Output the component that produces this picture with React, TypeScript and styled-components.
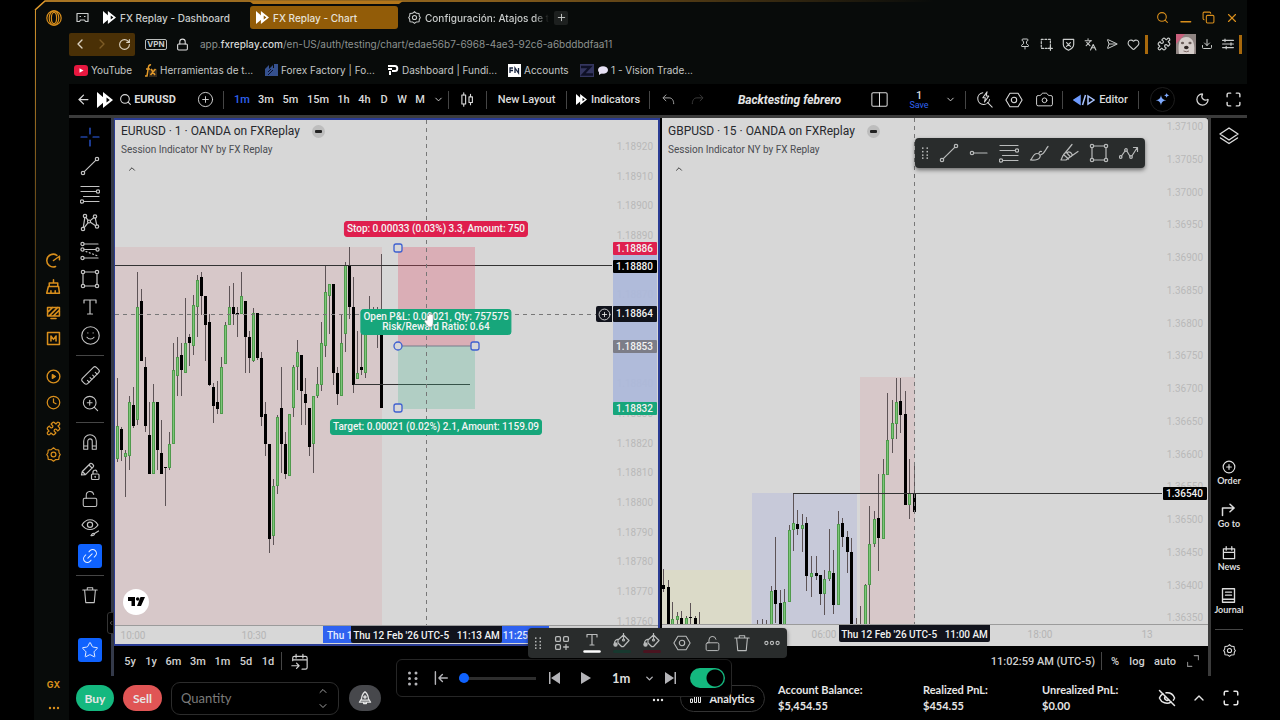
import React from "react";
import styled, { createGlobalStyle, css } from "styled-components";
import {
  ArrowLeft,
  Camera,
  ChevronDown,
  ChevronLeft,
  ChevronRight,
  ChevronUp,
  CirclePlus,
  Clock,
  Copy,
  Download,
  EyeOff,
  Heart,
  Languages,
  Lock,
  LockOpen,
  Link2,
  Maximize,
  Moon,
  Pin,
  Plus,
  Puzzle,
  RotateCw,
  Ruler,
  Search,
  SendHorizontal,
  Smile,
  Star,
  X,
  ZoomIn,
} from "lucide-react";

const ui = `Inter, "Liberation Sans", sans-serif`;
const tv = `Roboto, "Noto Sans", sans-serif`;
const panel = `Lato, "Noto Sans", sans-serif`;

const gold = "#d98f1c";

const Global = createGlobalStyle`
  * { box-sizing: border-box; }
  body { margin: 0; background: #000; color: #ddd; font-family: ${tv}; }
  button, input, select { font: inherit; color: inherit; }
  button { background: none; border: 0; padding: 0; display: inline-flex; align-items: center; justify-content: center; cursor: pointer; white-space: nowrap; }
  a { color: inherit; text-decoration: none; }
  svg { display: block; flex: none; }
`;

const Desktop = styled.div`
  min-height: 100vh;
  display: flex;
  padding: 0 33px 0 34px;
  background: #000;
`;

const BrowserWindow = styled.div`
  position: relative;
  flex: 1;
  min-width: 0;
  display: flex;
  flex-direction: column;
  background: #080b0a;
`;

const FrameLine = styled.svg`
  position: absolute;
  inset: 0;
  width: 100%;
  height: 100%;
  pointer-events: none;
`;

const TabBar = styled.header`
  display: flex;
  align-items: center;
  gap: 14px;
  height: 30px;
  padding: 6px 8px 1px 12px;
  position: relative;
  font-family: ${ui};
  font-size: 10px;
  font-weight: 500;
  color: #c9cccb;
`;

const TabStrip = styled.nav`
  display: flex;
  align-items: center;
  align-self: stretch;
  gap: 4px;
  flex: 1;
  min-width: 0;
  margin-left: -6px;
`;

const Tab = styled.a<{ $active?: boolean; $width: number }>`
  display: flex;
  align-items: center;
  gap: 4px;
  align-self: stretch;
  width: ${(p) => p.$width}px;
  padding: 0 6px;
  border-radius: 3px;
  white-space: nowrap;
  background: ${(p) => (p.$active ? "#925c08" : "transparent")};
  color: ${(p) => (p.$active ? "#e6e1d8" : "#c9cccb")};
`;

const FadedText = styled.span`
  mask-image: linear-gradient(90deg, #000 88%, transparent);
`;

const NewTab = styled.button`
  width: 14px;
  height: 14px;
  border-radius: 2px;
  background: #1d201f;
`;

const IconRow = styled.div<{ $gap: number; $color?: string; $indent?: number }>`
  display: flex;
  align-items: center;
  gap: ${(p) => p.$gap}px;
  margin-left: ${(p) => p.$indent ?? 0}px;
  color: ${(p) => p.$color ?? "#c9cccb"};
`;

const BrowserBody = styled.div`
  display: flex;
  flex: 1;
`;

const GxRail = styled.nav`
  width: 35px;
  display: flex;
  flex-direction: column;
  align-items: center;
  color: ${gold};
  padding: 217px 0 0 4px;
`;

const RailButton = styled.button`
  width: 26px;
  height: 26px;
  color: ${gold};
`;

const RailGap = styled.div<{ $grow?: boolean }>`
  height: 12px;
  flex-grow: ${(p) => (p.$grow ? 1 : 0)};
`;

const GxLabel = styled.button`
  height: 24px;
  font-family: ${ui};
  font-size: 9px;
  font-weight: 700;
  color: ${gold};
`;

const Content = styled.div`
  flex: 1;
  min-width: 0;
  display: flex;
  flex-direction: column;
`;

const AddressBar = styled.div`
  display: flex;
  align-items: center;
  height: 28px;
  font-family: ${ui};
  font-size: 10px;
  padding-right: 5px;
`;

const NavButtons = styled.div`
  display: flex;
  align-items: center;
  width: 66px;
  height: 23px;
  background: #4a3006;
  border-radius: 2px;
`;

const NavButton = styled.button<{ $dim?: boolean }>`
  width: 22px;
  color: ${(p) => (p.$dim ? "#7d5c26" : "#dcd3c2")};
`;

const VpnBadge = styled.button`
  width: 22px;
  height: 11px;
  margin: 0 9px 0 10px;
  border: 1px solid #b9bcbb;
  border-radius: 2px;
  font-size: 8px;
  font-weight: 700;
  color: #c9cccb;
`;

const Url = styled.a`
  flex: 1;
  margin-left: 11px;
  color: #8d9290;
  b {
    font-weight: 500;
    color: #d5d8d7;
  }
`;

const GoldBar = styled.i`
  width: 3px;
  height: 19px;
  background: #a8690c;
`;

const Avatar = styled.svg`
  width: 20px;
  height: 20px;
`;

const Bookmarks = styled.nav`
  display: flex;
  align-items: center;
  height: 26px;
  padding: 0 0 2px 5px;
  font-family: ${ui};
  font-size: 10px;
  color: #c4c7c6;
`;

const Bookmark = styled.a<{ $width: number }>`
  display: flex;
  align-items: center;
  gap: 3px;
  width: ${(p) => p.$width}px;
  white-space: nowrap;
`;

const ReplayApp = styled.section`
  flex: 1;
  display: flex;
  flex-direction: column;
  background: #000;
`;

const TopBar = styled.div`
  display: flex;
  align-items: center;
  height: 31px;
  font-size: 11px;
  font-weight: 500;
  color: #dadada;
`;

const Cell = styled.button<{ $w: number; $blue?: boolean; $dim?: boolean }>`
  width: ${(p) => p.$w}px;
  height: 28px;
  gap: 4px;
  flex: none;
  color: ${(p) => (p.$blue ? "#2f62f0" : p.$dim ? "#3c3c3c" : "inherit")};
`;

const Rule = styled.i<{ $m?: number }>`
  width: 1px;
  height: 18px;
  margin: 0 ${(p) => p.$m ?? 0}px;
  background: #454545;
  flex: none;
`;

const Gap = styled.div<{ $w: number }>`
  width: ${(p) => p.$w}px;
  flex: none;
`;

const Spacer = styled.div`
  flex: 1;
`;

const SymbolButton = styled.button`
  width: 55px;
  gap: 2px;
  font-size: 11px;
  font-weight: 700;
`;

const SessionName = styled.strong`
  font-weight: 700;
  font-style: italic;
  font-size: 12px;
  color: #e4e4e4;
`;

const SaveButton = styled.button`
  flex-direction: column;
  width: 34px;
  font-size: 11px;
  line-height: 10px;
  small {
    font-size: 9px;
    font-weight: 400;
    color: #2f62f0;
    line-height: 8px;
  }
`;

const AiSlot = styled.div`
  width: 46px;
  display: grid;
  place-items: center;
`;

const AiButton = styled.button`
  width: 25px;
  height: 25px;
  border-radius: 50%;
  border: 1px solid #1d1d1d;
`;

const Workspace = styled.div`
  flex: 1;
  display: flex;
  border-top: 3px solid #3b3b3b;
`;

const ToolColumn = styled.nav`
  position: relative;
  width: 45px;
  display: flex;
  flex-direction: column;
  align-items: center;
  border-right: 3px solid #343a4a;
  padding: 5px 0 14px;
  color: #c3c3c3;
`;

const ToolGroup = styled.div<{ $h: number }>`
  display: grid;
  grid-auto-rows: 1fr;
  height: ${(p) => p.$h}px;
  align-items: center;
  justify-items: center;
`;

const ToolButton = styled.button<{ $on?: boolean }>`
  width: 24px;
  height: 24px;
  border-radius: 3px;
  background: ${(p) => (p.$on ? "#0f62fe" : "transparent")};
  color: ${(p) => (p.$on ? "#e8f0ff" : "inherit")};
`;

const ToolRule = styled.hr<{ $m?: number }>`
  width: 28px;
  height: 1px;
  margin: ${(p) => p.$m ?? 5}px 0;
  border: 0;
  background: #454545;
`;

const Turned = styled.span<{ $deg: number }>`
  display: block;
  rotate: ${(p) => p.$deg}deg;
`;

const CollapseHandle = styled.button`
  position: absolute;
  right: -3px;
  top: 494px;
  width: 7px;
  height: 22px;
  background: #000;
  border: 1px solid #343434;
  border-radius: 3px 0 0 3px;
`;

const Center = styled.main`
  flex: 1;
  min-width: 0;
  display: flex;
  flex-direction: column;
`;

const Charts = styled.div`
  position: relative;
  flex: 1;
  display: grid;
  grid-template-columns: 1fr 1fr;
  gap: 2px;
`;

const Pane = styled.section<{ $selected?: boolean }>`
  min-width: 0;
  display: grid;
  grid-template-columns: 1fr 46px;
  grid-template-rows: 1fr 18px;
  background: #d7d7d7;
  color: #33363c;
  ${(p) =>
    p.$selected
      ? css`
          border: 2px solid #2a3c94;
          border-left-width: 1px;
        `
      : css`
          border-radius: 0 3px 0 0;
          grid-template-rows: 1fr 21px;
        `}
`;

const Plot = styled.div`
  position: relative;
  overflow: hidden;
  border-bottom: 1px solid #9b9b9b;
`;

const PlotSvg = styled.svg`
  position: absolute;
  inset: 0;
  width: 100%;
  height: 100%;
`;

const HandCursor = styled.svg`
  position: absolute;
  left: 309px;
  top: 192px;
  width: 14px;
  height: 16px;
`;

const Legend = styled.div<{ $top: number }>`
  position: relative;
  padding: ${(p) => p.$top}px 0 0 6px;
`;

const LegendTitle = styled.h2`
  display: flex;
  align-items: center;
  gap: 12px;
  margin: 0;
  font-size: 12px;
  line-height: 16px;
  font-weight: 400;
  color: #26282d;
`;

const LegendPill = styled.span`
  display: grid;
  place-items: center;
  width: 13px;
  height: 13px;
  border-radius: 50%;
  background: #bdbdbd;
  &::before {
    content: "";
    width: 7px;
    height: 3px;
    border-radius: 1px;
    background: #222;
  }
`;

const LegendStudy = styled.p`
  margin: 3px 0 6px;
  font-size: 10px;
  line-height: 16px;
  color: #4b4d52;
`;

const LegendToggle = styled.button`
  && {
    display: flex;
  }
  margin-left: 6px;
  color: #222;
`;

const PriceAxis = styled.div`
  position: relative;
  overflow: hidden;
  font-size: 10px;
  line-height: 14px;
  border-bottom: 1px solid #9b9b9b;
`;

const Tick = styled.span`
  position: absolute;
  right: 5px;
  margin-top: -7px;
  color: #b9b9b9;
`;

const AxisRange = styled.i`
  position: absolute;
  left: 1px;
  right: 1px;
  background: #adb8daee;
`;

const PriceTag = styled.span<{ $bg: string; $tall?: boolean }>`
  position: absolute;
  left: 1px;
  right: 1px;
  height: ${(p) => (p.$tall ? 16 : 13)}px;
  margin-top: ${(p) => (p.$tall ? -8 : -6)}px;
  line-height: ${(p) => (p.$tall ? 16 : 13)}px;
  padding-right: 4px;
  text-align: right;
  font-weight: 500;
  color: #f2f2f2;
  background: ${(p) => p.$bg};
  border-radius: 1px;
`;

const TimeAxis = styled.div`
  grid-column: 1 / -1;
  position: relative;
  overflow: hidden;
  font-size: 10px;
  line-height: 20px;
`;

const TimeTick = styled.span`
  position: absolute;
  transform: translateX(-50%);
  color: #b5b5b5;
`;

const TimeRange = styled.div`
  position: absolute;
  top: 0;
  height: 17px;
  line-height: 19px;
  display: flex;
  justify-content: space-between;
  padding: 0 21px 0 4px;
  background: #2f62f0;
  color: #e8eeff;
  font-weight: 500;
`;

const TimeTag = styled.div`
  position: absolute;
  top: 0;
  width: 151px;
  height: 17px;
  line-height: 19px;
  text-align: center;
  white-space: pre;
  font-weight: 500;
  color: #f2f2f2;
  background: #11131c;
  border-radius: 0 0 2px 2px;
`;

const TradeLabel = styled.div<{ $bg: string }>`
  position: absolute;
  transform: translateX(-50%);
  padding: 2px;
  border-radius: 3px;
  background: ${(p) => p.$bg};
  border: 1px solid ${(p) => p.$bg};
  color: #f4f4f4;
  font-size: 10px;
  line-height: 10px;
  font-weight: 500;
  text-align: center;
  white-space: nowrap;
`;

const AddAlert = styled.button`
  position: absolute;
  right: 0;
  width: 16px;
  height: 16px;
  margin-top: -8px;
  border-radius: 2px 0 0 2px;
  background: #11131c;
  color: #eee;
`;

const TvBadge = styled.a`
  position: absolute;
  left: 8px;
  bottom: 10px;
  width: 26px;
  height: 26px;
  border-radius: 50%;
  background: #fff;
  display: grid;
  place-items: center;
`;

const FloatingTools = styled.div`
  position: absolute;
  display: flex;
  align-items: center;
  background: #292c2c;
  border-radius: 4px;
  box-shadow: 0 2px 4px rgba(0, 0, 0, 0.5);
  color: #b9bbbb;
`;

const FavoriteTools = styled(FloatingTools)`
  right: 63px;
  top: 20px;
  width: 230px;
  height: 30px;
`;

const ShapeTools = styled(FloatingTools)`
  left: 414px;
  bottom: -12px;
  width: 259px;
  height: 30px;
  padding-left: 1px;
  z-index: 2;
`;

const FloatButton = styled.button<{ $w: number }>`
  width: ${(p) => p.$w}px;
  height: 28px;
  flex: none;
`;

const RangeBar = styled.div`
  display: flex;
  align-items: center;
  height: 30px;
  padding-left: 4px;
  font-size: 11px;
  font-weight: 500;
  color: #d0d0d0;
`;

const RightRail = styled.nav`
  width: 39px;
  border-left: 3px solid #3b3b3b;
  display: flex;
  flex-direction: column;
  align-items: center;
  padding: 4px 0 12px;
  color: #dcdcdc;
`;

const RailItem = styled.button`
  flex-direction: column;
  gap: 2px;
  height: 43px;
  font-family: ${panel};
  font-size: 9px;
  line-height: 10px;
  font-weight: 700;
`;

const AccountBar = styled.footer`
  position: relative;
  display: flex;
  align-items: center;
  height: 44px;
  padding: 0 0 0 7px;
  font-family: ${panel};
  font-size: 11px;
  color: #e6e6e6;
`;

const Pill = styled.button<{ $bg: string; $w: number }>`
  width: ${(p) => p.$w}px;
  height: 26px;
  margin-right: 9px;
  border-radius: 13px;
  background: ${(p) => p.$bg};
  font-size: 12px;
  font-weight: 700;
`;

const QuantityBox = styled.div`
  display: flex;
  align-items: center;
  width: 168px;
  height: 33px;
  margin-right: 10px;
  padding: 0 9px;
  border: 1px solid #2c2c2c;
  border-radius: 9px;
  input {
    flex: 1;
    min-width: 0;
    padding: 0;
    border: 0;
    outline: 0;
    background: none;
    font-size: 13px;
  }
  input::placeholder {
    color: #7b7b7b;
    opacity: 1;
  }
`;

const Stepper = styled.div`
  display: flex;
  flex-direction: column;
  gap: 3px;
  color: #a0a0a0;
`;

const MoreButton = styled.button`
  width: 24px;
  height: 20px;
  align-self: flex-end;
  margin-bottom: 10px;
`;

const AnalyticsButton = styled.button`
  width: 85px;
  height: 27px;
  gap: 8px;
  margin: 0 13px 0 10px;
  border: 1px solid #333;
  border-radius: 14px;
  font-weight: 700;
`;

const Stat = styled.dl<{ $w: number }>`
  width: ${(p) => p.$w}px;
  margin: 0;
  line-height: 16px;
  font-weight: 700;
  dd {
    margin: 0;
  }
`;

const ReplayBar = styled.div`
  position: absolute;
  left: 327px;
  top: -17px;
  width: 336px;
  height: 38px;
  display: flex;
  align-items: center;
  background: #000;
  border: 1px solid #262626;
  border-radius: 6px;
  color: #b4b4b8;
`;

const Slider = styled.input`
  appearance: none;
  flex: none;
  width: 77px;
  height: 10px;
  margin: 0 12px 0 5px;
  background: linear-gradient(#2e2e2e, #2e2e2e) center / 100% 3px no-repeat;
  &::-webkit-slider-thumb {
    appearance: none;
    width: 10px;
    height: 10px;
    border-radius: 50%;
    background: #0f62fe;
  }
`;

const StepSelect = styled.select`
  appearance: none;
  flex: none;
  width: 27px;
  margin-right: 5px;
  padding: 0;
  border: 0;
  background: none;
  font-size: 13px;
  font-weight: 700;
  color: #dcdcdc;
`;

const Switch = styled.input`
  appearance: none;
  flex: none;
  width: 35px;
  height: 20px;
  margin: 0 0 0 7px;
  border-radius: 10px;
  background: radial-gradient(circle at 25px 10px, #000 8px, #14b87f 9px);
`;

/* ---------- drawings ---------- */

const Draw = ({ s = 20, w = 1.2, children }: { s?: number; w?: number; children: React.ReactNode }) => (
  <svg width={s} height={s} viewBox="0 0 20 20" fill="none" stroke="currentColor" strokeWidth={w} strokeLinecap="round" strokeLinejoin="round">
    {children}
  </svg>
);

const FxLogo = ({ size = 13 }: { size?: number }) => (
  <svg width={size} height={size} viewBox="0 0 16 16" fill="#fff">
    <path d="M0 0l7 6v4l-7 6z" />
    <path fillRule="evenodd" d="M6 0l10 8-10 8zM9.5 5.500v5l3.300-2.500z" />
  </svg>
);

const OperaLogo = () => (
  <svg width="16" height="16" viewBox="0 0 16 16" fill="none" stroke={gold} strokeWidth="1.2">
    <circle cx="8" cy="8" r="7.200" />
    <ellipse cx="8" cy="8" rx="4.800" ry="7.200" />
    <ellipse cx="8" cy="8" rx="2.600" ry="5.600" />
  </svg>
);

const Crosshair = () => (
  <Draw>
    <path stroke="#2f62f0" d="M10 1v6M10 13v6M1 10h6M13 10h6" />
  </Draw>
);
const TrendLine = () => (
  <Draw>
    <circle cx="3" cy="17" r="1.700" />
    <circle cx="17" cy="3" r="1.700" />
    <path d="M4.300 15.700L15.700 4.300" />
  </Draw>
);
const HorizRay = () => (
  <Draw>
    <circle cx="3" cy="10" r="1.700" />
    <path d="M4.700 10H18" />
  </Draw>
);
const Fib = () => (
  <Draw>
    <path d="M1 2.500h18M1 7.500h15.500M3.500 12.500H19M3.500 17.500H19" />
    <circle cx="18" cy="7.500" r="1.700" />
    <circle cx="2" cy="17.500" r="1.700" />
  </Draw>
);
const Pattern = () => (
  <Draw>
    <circle cx="5" cy="4" r="1.700" />
    <circle cx="15" cy="4.500" r="1.700" />
    <circle cx="3" cy="17" r="1.700" />
    <circle cx="17" cy="14.500" r="1.700" />
    <circle cx="9" cy="9.500" r="1.500" />
    <path d="M4.800 5.700L3.300 15.300M6 5.300l2 3M10.200 8.600L13.700 5.700M15.300 6.200l1.400 6.600M4.200 15.700l3.900-5M10.400 10.300l5.200 3.400" />
  </Draw>
);
const Projection = () => (
  <Draw>
    <path d="M4 3h14M4 8.500h12M4 17h14" />
    <circle cx="2.500" cy="3" r="1.600" />
    <circle cx="2.500" cy="8.500" r="1.600" />
    <circle cx="2.500" cy="17" r="1.600" />
    <circle cx="17.500" cy="8.500" r="1.600" />
    <path strokeDasharray="1 2.500" d="M6 10.500l12 4.500" />
  </Draw>
);
const Rectangle = () => (
  <Draw>
    <path d="M5 3h10M5 17h10M3 5v10M17 5v10" />
    <circle cx="3" cy="3" r="1.700" />
    <circle cx="17" cy="3" r="1.700" />
    <circle cx="3" cy="17" r="1.700" />
    <circle cx="17" cy="17" r="1.700" />
  </Draw>
);
const TextTool = () => (
  <Draw>
    <path d="M4 6V3h12v3M10 3v14M7.500 17h5" />
  </Draw>
);
const MagnetTool = () => (
  <Draw s={18}>
    <path d="M3 18V9a7 7 0 0 1 14 0v9h-4.500V9a2.500 2.500 0 0 0-5 0v9zM3 14.500h4.500M12.500 14.500H17" />
  </Draw>
);
const PencilLock = () => (
  <Draw>
    <path d="M1.500 14l.8-3.500 8-8c1-1 4.200 2 3.200 3.200l-8 8zM9 4l3.200 3.200M2.300 10.500l3 3M13 13v-1.500a2 2 0 0 1 4-.5" />
    <rect x="11.500" y="13" width="7.500" height="5.500" rx="1" />
    <path d="M15.200 15.300v1" />
  </Draw>
);
const EyeBrush = () => (
  <Draw>
    <path d="M2 8c4-7 12-7 16 0-4 6-12 6-16 0z" />
    <circle cx="10" cy="7.800" r="2.600" />
    <path d="M11 18.500c2 .4 3.500-.4 3.500-1.800M14.500 16.500l4-2.500M11 18.500c.8-.6.600-2 2.500-2.200" />
  </Draw>
);
const TrashCan = ({ s = 18 }: { s?: number }) => (
  <Draw s={s}>
    <path d="M2 4.500h16M7 4.500V2h6v2.500M4 4.500L5.300 18.500h9.400L16 4.500" />
  </Draw>
);
const LayersIcon = () => (
  <Draw w={1.4}>
    <path d="M10 2L19 8l-9 6-9-6zM1.500 12L10 17.500l8.500-5.500" />
  </Draw>
);
const Brush = () => (
  <Draw>
    <path d="M1.500 17c2-1.300 2.500-6.500 6.500-6.500 3 0 4 2.500 2.500 4.500-1.200 1.800-5 2.300-9 2zM11.500 12c4.500-1.500 5-6 7.500-8.500M10 10c.5-1.500 1.500-2 2.500-1.500" />
  </Draw>
);
const Highlighter = () => (
  <Draw>
    <path d="M2 17l2-4.500L13 1.500M2 17h5l2-1.500 10-7M4.500 11.500l5 4.500M7 9l4.500 5c1.500-.5 2-2 1-3.500s-3-2-4-1" />
  </Draw>
);
const ArrowPath = () => (
  <Draw>
    <path d="M2.500 13l3.500-5M8 8.200l3 5M13 12.800L18 5M14.500 4.500H18.500V8.500" />
    <circle cx="1.700" cy="14" r="1.300" />
    <circle cx="7" cy="7" r="1.300" />
    <circle cx="12" cy="14" r="1.300" />
  </Draw>
);
const Hexagon = ({ s = 18 }: { s?: number }) => (
  <Draw s={s}>
    <path d="M5.500 2.500h9L19 10l-4.500 7.500h-9L1 10z" />
    <circle cx="10" cy="10" r="3" />
  </Draw>
);
const GearHex = ({ s = 15 }: { s?: number }) => (
  <Draw s={s} w={1.6}>
    <path d="M10 1l3 2.500 4 .5.500 4L19 10l-1.500 2.500-.5 4-4 .3L10 19l-3-2.200-4-.3-.5-4L1 10l1.500-2L3 4l4-.5z" />
    <circle cx="10" cy="10" r="3.200" />
  </Draw>
);
const Grip = () => (
  <svg width="8" height="12" viewBox="0 0 8 12" fill="currentColor">
    {[1, 4.5, 8, 11].map((y) => (
      <React.Fragment key={y}>
        <rect x="1" y={y - 0.6} width="1.500" height="1.500" />
        <rect x="5.500" y={y - 0.6} width="1.500" height="1.500" />
      </React.Fragment>
    ))}
  </svg>
);
const GripDots = () => (
  <svg width="12" height="15" viewBox="0 0 12 15" fill="currentColor">
    {[2, 7.5, 13].map((y) => (
      <React.Fragment key={y}>
        <circle cx="2.500" cy={y} r="1.500" />
        <circle cx="9" cy={y} r="1.500" />
      </React.Fragment>
    ))}
  </svg>
);
const Bucket = ({ color }: { color: string }) => (
  <Draw>
    <path d="M6 7l5.500-5L17 7.500 12 13c-1 1-2.300.8-3 0L6 10zM11.500 0v6M7 6c-3 .5-4.500 2-4.500 4" />
    <circle cx="3.500" cy="11.500" r="1.600" fill="currentColor" />
    <circle cx="11.500" cy="7" r="1" />
    <path stroke={color} strokeWidth="3" d="M2.500 18.500h15" />
  </Draw>
);
const TextColor = () => (
  <Draw>
    <path d="M5 4V1.500h10V4M10 1.500V12M8 12h4" />
    <path stroke="#fff" strokeWidth="2.500" d="M2.500 18.500h15" />
  </Draw>
);
const Dots = ({ s = 16 }: { s?: number }) => (
  <Draw s={s} w={1.4}>
    <circle cx="3" cy="10" r="2" />
    <circle cx="10" cy="10" r="2" />
    <circle cx="17" cy="10" r="2" />
  </Draw>
);
const SolidDots = () => (
  <svg width="12" height="4" viewBox="0 0 12 4" fill="currentColor">
    <circle cx="2" cy="2" r="1.200" />
    <circle cx="6" cy="2" r="1.200" />
    <circle cx="10" cy="2" r="1.200" />
  </svg>
);
const Candles = () => (
  <Draw s={15} w={1.5}>
    <path d="M5 1v3M5 16v3M14 3v3M14 14v3" />
    <rect x="2.500" y="4" width="5" height="12" />
    <rect x="12" y="6.500" width="4.500" height="7.500" />
  </Draw>
);
const GridPlus = () => (
  <Draw s={16} w={1.6}>
    <rect x="2" y="2" width="6" height="6" rx="1.500" />
    <rect x="12" y="2" width="6" height="6" rx="1.500" />
    <rect x="2" y="12" width="6" height="6" rx="1.500" />
    <path d="M15 12v6M12 15h6" />
  </Draw>
);
const CalendarGo = () => (
  <Draw s={17} w={1.4}>
    <path d="M2 9V6a2 2 0 0 1 2-2h13a2 2 0 0 1 2 2v11a2 2 0 0 1-2 2h-4M6 1.500V6M14 1.500V6M2 8h17M1 15h8M6.500 12L9.500 15l-3 3" />
  </Draw>
);
const UndoArrow = () => (
  <Draw s={13} w={1.5}>
    <path stroke="#a8a8a8" d="M6 3L1.500 7.500 6 12M2 7.500h9c4 0 7 3 7 9" />
  </Draw>
);
const RedoArrow = () => (
  <Draw s={13} w={1.5}>
    <path d="M14 3l4.500 4.500L14 12M18 7.500H9c-4 0-7 3-7 9" />
  </Draw>
);
const Stars = () => (
  <svg width="15" height="15" viewBox="0 0 20 20" fill="#7fabff">
    <path d="M8 4c.8 4.500 2.500 6.200 7 7-4.500.8-6.200 2.500-7 7-.8-4.500-2.500-6.200-7-7 4.500-.8 6.200-2.500 7-7zM15.500 1c.3 2.200 1.200 3.200 3.500 3.500-2.300.3-3.200 1.200-3.500 3.500-.3-2.300-1.200-3.200-3.500-3.500 2.300-.3 3.200-1.300 3.500-3.500z" />
  </svg>
);

/* ---------- chart data: high, body top, body bottom, low in thirds of a pixel ---------- */

type Candle = [x: number, high: number, top: number, bottom: number, low: number, up: 0 | 1];

const eurusdBars: number[][] = [
  [415, 557, 656, 665, 1], [560, 567, 630, 662, 0], [630, 640, 650, 770, 1], [468, 487, 649, 690, 1],
  [440, 496, 558, 565, 0], [95, 202, 541, 555, 1], [147, 184, 362, 362, 0], [352, 380, 558, 575, 0],
  [487, 586, 702, 702, 0], [433, 487, 702, 702, 1], [487, 487, 630, 690, 0], [541, 640, 702, 702, 0],
  [681, 681, 684, 797, 0], [576, 613, 683, 690, 1], [309, 389, 613, 613, 1], [290, 352, 409, 468, 1],
  [309, 345, 389, 468, 0], [174, 309, 398, 398, 1], [283, 291, 309, 378, 0], [165, 194, 317, 345, 1],
  [105, 121, 202, 291, 1], [95, 112, 167, 226, 0], [167, 167, 256, 362, 0], [222, 247, 434, 437, 0],
  [430, 442, 497, 549, 0], [424, 487, 506, 522, 0], [352, 380, 523, 523, 1], [247, 256, 371, 371, 1],
  [138, 202, 256, 256, 1], [130, 202, 221, 255, 0], [202, 220, 223, 290, 0], [95, 167, 221, 221, 1],
  [184, 184, 291, 398, 0], [273, 291, 354, 398, 0], [203, 220, 362, 365, 1], [220, 220, 354, 361, 0],
  [336, 353, 531, 557, 0], [487, 523, 612, 648, 0], [612, 612, 898, 940, 0], [718, 739, 887, 914, 1],
  [524, 532, 738, 762, 1], [380, 505, 612, 700, 0], [576, 612, 702, 717, 0], [523, 523, 709, 709, 1],
  [374, 380, 505, 531, 1], [299, 336, 380, 450, 1], [345, 345, 452, 556, 0], [415, 461, 488, 556, 0],
  [505, 505, 620, 648, 0], [468, 468, 613, 700, 1], [380, 433, 468, 475, 1], [247, 310, 434, 452, 1],
  [76, 157, 317, 350, 1], [132, 132, 167, 283, 1], [131, 131, 398, 434, 0], [380, 398, 461, 495, 0],
  [222, 309, 469, 469, 1], [67, 76, 283, 335, 1], [22, 76, 202, 238, 0], [112, 202, 434, 460, 0],
  [273, 398, 416, 416, 1], [273, 380, 389, 405, 0], [250, 260, 398, 415, 1], [167, 210, 260, 260, 1],
  [202, 220, 260, 260, 0], [202, 230, 260, 325, 1], [41, 215, 505, 505, 0],
];

const eurusd: Candle[] = eurusdBars.map(([h, t, b, l, up], i) => [22 + i * 12.03, h, t, b, l, up as 0 | 1]);

const gbpusd: Candle[] = [
  [10, 628, 675, 686, 697, 0], [25, 660, 681, 795, 795, 0], [38, 726, 777, 795, 795, 1], [52, 757, 769, 780, 795, 1],
  [65, 754, 773, 795, 795, 0], [78, 769, 773, 795, 795, 1], [91, 730, 772, 775, 795, 0], [105, 769, 775, 795, 795, 0],
  [118, 756, 795, 795, 795, 0], [293, 780, 795, 795, 795, 0], [306, 778, 795, 795, 795, 0], [320, 780, 795, 795, 795, 0],
  [334, 678, 693, 795, 795, 1], [347, 532, 690, 732, 790, 0], [360, 690, 730, 795, 795, 0], [374, 686, 727, 795, 795, 1],
  [387, 495, 511, 727, 727, 1], [400, 400, 490, 511, 572, 1], [413, 451, 493, 507, 525, 0], [427, 462, 495, 507, 575, 1],
  [440, 470, 489, 648, 692, 0], [453, 588, 638, 652, 710, 1], [468, 588, 640, 647, 660, 0], [481, 645, 646, 702, 735, 0],
  [494, 630, 656, 703, 765, 1], [508, 506, 634, 658, 663, 1], [521, 570, 639, 734, 762, 0], [534, 453, 493, 734, 734, 1],
  [547, 473, 489, 531, 560, 0], [561, 512, 532, 577, 640, 0], [574, 535, 577, 795, 795, 0], [588, 775, 795, 795, 795, 0],
  [601, 738, 795, 795, 795, 0], [616, 672, 674, 795, 795, 1], [629, 439, 553, 676, 795, 1], [643, 453, 478, 552, 560, 1],
  [656, 341, 475, 534, 632, 0], [669, 297, 343, 538, 538, 1], [682, 98, 239, 346, 346, 1], [696, 120, 190, 238, 280, 1],
  [709, 55, 125, 193, 238, 1], [722, 53, 124, 166, 220, 0], [735, 93, 163, 434, 434, 0], [748, 297, 400, 436, 478, 1],
  [764, 318, 400, 455, 455, 0],
];

const CandleSeries = ({ data, dx, dy }: { data: Candle[]; dx: number; dy: number }) => (
  <g>
    {data.map(([x, high, top, bottom, low, up], i) => {
      const px = Math.floor(x / 3 + dx);
      const y = (v: number) => Math.round(v / 3 + dy);
      const h = Math.max(1, y(bottom) - y(top));
      return (
        <g key={i}>
          <path d={`M${px + 0.5} ${y(high)}V${y(low)}`} stroke="#5d5356" />
          {bottom > top && <rect x={px - 1} y={y(top)} width="3" height={h} fill={up ? "#4f9a4c" : "#000"} />}
          {bottom > top && up === 1 && h > 2 && (
            <rect x={px} y={y(top) + 1} width="1" height={h - 2} fill="#7cc678" />
          )}
        </g>
      );
    })}
  </g>
);

const priceTicks = (from: number, step: number, count: number, y0: number, dy: number, skip: number[] = []) =>
  Array.from({ length: count }, (_, i) => ({ i, label: (from - step * i).toFixed(5), y: y0 + dy * i })).filter(
    (t) => !skip.includes(t.i),
  );

const ChartLegend = ({ title, top }: { title: string; top: number }) => (
  <Legend $top={top}>
    <LegendTitle>
      {title}
      <LegendPill />
    </LegendTitle>
    <LegendStudy>Session Indicator NY by FX Replay</LegendStudy>
    <LegendToggle aria-label="Collapse legend">
      <ChevronUp size={10} />
    </LegendToggle>
  </Legend>
);

const EurusdPane = () => (
  <Pane $selected>
    <Plot>
      <PlotSvg>
        <rect x="0" y="127" width="267" height="100%" fill="#d7c8c9" />
        <CandleSeries data={eurusd} dx={-5} dy={120} />
        <path d="M0 145.500H499M239 264.500H355" stroke="#333" />
        <rect x="283" y="127" width="77" height="99" fill="#e0506b" fillOpacity=".3" />
        <rect x="283" y="226" width="77" height="63" fill="#3fb58c" fillOpacity=".25" />
        <path d="M283 226H360" stroke="#777c8c" />
        <line x1="311.500" y1="0" x2="311.500" y2="100%" stroke="#777" strokeDasharray="4 4" />
        <line x1="0" y1="194.500" x2="482" y2="194.500" stroke="#777" strokeDasharray="4 4" />
        <g fill="#d7d7d7" stroke="#3d5fd0" strokeWidth="1.300">
          <rect x="279" y="124" width="8" height="8" rx="2" />
          <circle cx="283" cy="226" r="4" />
          <rect x="356" y="222" width="8" height="8" rx="2" />
          <rect x="279" y="284" width="8" height="8" rx="2" />
        </g>
      </PlotSvg>
      <ChartLegend title="EURUSD · 1 · OANDA on FXReplay" top={3} />
      <TradeLabel $bg="#df1f4e" style={{ left: 321, top: 101 }}>
        Stop: 0.00033 (0.03%) 3.3, Amount: 750
      </TradeLabel>
      <TradeLabel $bg="#17a67b" style={{ left: 321, top: 189 }}>
        Open P&amp;L: 0.00021, Qty: 757575
        <br />
        Risk/Reward Ratio: 0.64
      </TradeLabel>
      <TradeLabel $bg="#17a67b" style={{ left: 321, top: 299 }}>
        Target: 0.00021 (0.02%) 2.1, Amount: 1159.09
      </TradeLabel>
      <AddAlert aria-label="Add alert" style={{ top: 194 }}>
        <CirclePlus size={13} strokeWidth={1.5} />
      </AddAlert>
      <TvBadge href="#" aria-label="TradingView">
        <svg width="17" height="10" viewBox="0 0 17 10" fill="#000">
          <path d="M0 0h7v9H3.500V4H0zM12.500 0H17l-4 9H9z" />
          <circle cx="9.700" cy="2" r="1.800" />
        </svg>
      </TvBadge>
      <HandCursor viewBox="0 0 14 16">
        <path d="M3 8.500V4c0-1 1.500-1 1.500 0V2.500c0-1.200 1.600-1.200 1.600 0V2c0-1.200 1.600-1.200 1.600 0v1c0-1 1.500-1 1.500 0v6.500c0 3-1 4.500-1.500 5.500H4.500C4 13.500.5 10.500.5 9.500S2 7.500 3 8.500z" fill="#fff" stroke="#777" strokeWidth=".5" />
      </HandCursor>
    </Plot>
    <PriceAxis>
      {priceTicks(1.1892, 0.0001, 17, 27, 29.67, [4, 6, 7]).map((t) => (
        <Tick key={t.label} style={{ top: t.y }}>{t.label}</Tick>
      ))}
      <AxisRange style={{ top: 128, height: 160 }} />
      <PriceTag $bg="#df1f4e" style={{ top: 128 }}>1.18886</PriceTag>
      <PriceTag $bg="#000" style={{ top: 146 }}>1.18880</PriceTag>
      <PriceTag $bg="#11131c" $tall style={{ top: 194 }}>1.18864</PriceTag>
      <PriceTag $bg="#7c7d88" style={{ top: 226 }}>1.18853</PriceTag>
      <PriceTag $bg="#17a67b" style={{ top: 288 }}>1.18832</PriceTag>
    </PriceAxis>
    <TimeAxis>
      <TimeTick style={{ left: 18 }}>10:00</TimeTick>
      <TimeTick style={{ left: 139 }}>10:30</TimeTick>
      <TimeRange style={{ left: 208, width: 226 }}>
        <span>Thu 1</span>
        <span>11:25</span>
      </TimeRange>
      <TimeTag style={{ left: 236 }}>{"Thu 12 Feb '26 UTC-5   11:13 AM"}</TimeTag>
    </TimeAxis>
  </Pane>
);

const GbpusdPane = () => (
  <Pane>
    <Plot>
      <PlotSvg>
        <rect x="0" y="452" width="89" height="100%" fill="#dbdac8" />
        <rect x="90" y="375" width="105" height="100%" fill="#c7c9d9" />
        <rect x="198" y="259" width="55" height="100%" fill="#d7c8c9" />
        <CandleSeries data={gbpusd} dx={-2} dy={242} />
        <line x1="131" y1="375.500" x2="100%" y2="375.500" stroke="#333" />
        <line x1="252.500" y1="0" x2="252.500" y2="100%" stroke="#777" strokeDasharray="4 4" />
      </PlotSvg>
      <ChartLegend title="GBPUSD · 15 · OANDA on FXReplay" top={5} />
    </Plot>
    <PriceAxis>
      {priceTicks(1.371, 0.0005, 16, 9, 32.75).map((t) => (
        <Tick key={t.label} style={{ top: t.y }}>{t.label}</Tick>
      ))}
      <PriceTag $bg="#000" style={{ top: 375 }}>1.36540</PriceTag>
    </PriceAxis>
    <TimeAxis>
      <TimeTick style={{ left: 162 }}>06:00</TimeTick>
      <TimeTick style={{ left: 378 }}>18:00</TimeTick>
      <TimeTick style={{ left: 485 }}>13</TimeTick>
      <TimeTag style={{ left: 177 }}>{"Thu 12 Feb '26 UTC-5   11:00 AM"}</TimeTag>
    </TimeAxis>
  </Pane>
);

const timeframes: [string, number][] = [
  ["3m", 24], ["5m", 25], ["15m", 30], ["1h", 21], ["4h", 21], ["D", 18], ["W", 18], ["M", 18],
];

const ranges: [string, number][] = [
  ["5y", 24], ["1y", 18], ["6m", 27], ["3m", 22], ["1m", 27], ["5d", 20], ["1d", 24],
];

const railIcons = [
  { name: "GX Control", d: "M14 4A7.500 7.500 0 1 0 12.500 17M10 10l7-5M17 5v4" },
  { name: "GX Cleaner", d: "M10 2v4M5 6h10v4H5zM4 10L2 18h15l-1-8M7 18v-3M12 18v-3" },
  { name: "Wallpapers", d: "M3 4h14v10H3zM3 10l6-6M5 14L15 4M10 14l7-7M7 17h6" },
  { name: "Mods", d: "M3 3h14v14H3zM7 13V7l3 4 3-4v6" },
];

export default function App() {
  return (
    <Desktop>
      <Global />
      <BrowserWindow>
        <FrameLine>
          <defs>
            <linearGradient id="top" gradientUnits="userSpaceOnUse" x1="0" y1="0" x2="900" y2="0">
              <stop offset="0" stopColor="#e09a2c" />
              <stop offset=".5" stopColor="#b37a22" />
              <stop offset="1" stopColor="#b37a22" stopOpacity="0" />
            </linearGradient>
            <linearGradient id="side" gradientUnits="userSpaceOnUse" x1="0" y1="0" x2="0" y2="500">
              <stop offset="0" stopColor="#d9962c" />
              <stop offset="1" stopColor="#6b4510" stopOpacity="0" />
            </linearGradient>
          </defs>
          <path d="M0 0H12L0 11z" fill="#000" />
          <path d="M1 10L11 1H900" stroke="url(#top)" strokeWidth="1.600" fill="none" />
          <path d="M1.500 9V700" stroke="url(#side)" fill="none" />
          <path d="M184 1H338L334 4H188z" transform="translate(31)" fill="#b3761a" />
        </FrameLine>

        <TabBar>
          <OperaLogo />
          <svg width="13" height="11" viewBox="0 0 13 11" fill="none" stroke="currentColor" strokeWidth="1.200" strokeLinejoin="round">
            <path d="M1 1.500h11v8H9.500L8.500 8h-4l-1 1.500H1zM3.500 4.500h1.500M8 4.500h1.500" />
          </svg>
          <TabStrip>
            <Tab href="#" $width={149}>
              <FxLogo />
              FX Replay - Dashboard
            </Tab>
            <Tab href="#" $width={148} $active>
              <FxLogo />
              FX Replay - Chart
            </Tab>
            <Tab href="#" $width={148}>
              <GearHex s={13} />
              <FadedText>Configuración: Atajos de t</FadedText>
            </Tab>
            <NewTab aria-label="New tab">
              <Plus size={11} />
            </NewTab>
          </TabStrip>
          <IconRow $gap={10} $color={gold}>
            <Search size={13} />
            <Draw s={13} w={2}>
              <path d="M3 16.500h15" />
            </Draw>
            <Copy size={13} />
            <X size={14} />
          </IconRow>
        </TabBar>

        <BrowserBody>
          <GxRail>
            {railIcons.map(({ name, d }) => (
              <RailButton key={name} aria-label={name}>
                <Draw s={17} w={1.8}>
                  <path d={d} />
                </Draw>
              </RailButton>
            ))}
            <RailGap />
            <RailButton aria-label="Player">
              <Draw s={15} w={1.8}>
                <circle cx="10" cy="10" r="8.500" />
                <path d="M8.500 7.500l4 2.500-4 2.500z" fill="currentColor" />
              </Draw>
            </RailButton>
            <RailButton aria-label="History"><Clock size={15} /></RailButton>
            <RailButton aria-label="Extensions"><Puzzle size={15} /></RailButton>
            <RailButton aria-label="Settings"><GearHex /></RailButton>
            <RailGap $grow />
            <GxLabel>GX</GxLabel>
            <GxLabel aria-label="More"><SolidDots /></GxLabel>
          </GxRail>

          <Content>
            <AddressBar>
              <NavButtons>
                <NavButton aria-label="Back"><ChevronLeft size={16} /></NavButton>
                <NavButton aria-label="Forward" $dim><ChevronRight size={16} /></NavButton>
                <NavButton aria-label="Reload"><RotateCw size={13} /></NavButton>
              </NavButtons>
              <VpnBadge>VPN</VpnBadge>
              <Lock size={13} />
              <Url href="#">
                app.<b>fxreplay.com</b>/en-US/auth/testing/chart/edae56b7-6968-4ae3-92c6-a6bddbdfaa11
              </Url>
              <IconRow $gap={5}>
                <IconRow $gap={9}>
                  <Pin size={12} />
                  <Draw s={13} w={1.8}>
                    <path strokeDasharray="3 2.500" d="M2 2h14v14H2z" />
                    <path d="M16 13v6M13 16h6" />
                  </Draw>
                  <Draw s={13} w={1.8}>
                    <path d="M2 2h16v8c0 5-4 7-8 9-4-2-8-4-8-9zM7 7l6 6M13 7l-6 6" />
                  </Draw>
                  <Languages size={13} />
                  <SendHorizontal size={12} />
                  <Heart size={13} />
                </IconRow>
                <GoldBar />
                <IconRow $gap={5} $indent={4}>
                  <Puzzle size={14} />
                  <Avatar viewBox="0 0 20 20">
                    <rect width="20" height="20" fill="#8f8482" />
                    <path d="M0 0h9L0 10z" fill="#c9607c" />
                    <path d="M3 20C2 12 2 3 10 3s9 8 8 17z" fill="#d6cecb" />
                    <ellipse cx="6.500" cy="9" rx="1.600" ry="1.200" fill="#6a5d5a" />
                    <ellipse cx="14" cy="9" rx="1.600" ry="1.200" fill="#6a5d5a" />
                    <ellipse cx="10.300" cy="13.500" rx="2.300" ry="1.800" fill="#2d2524" />
                    <path d="M7.500 17q3 1.500 5.500 0" stroke="#806a66" fill="none" />
                  </Avatar>
                  <Download size={12} />
                </IconRow>
                <IconRow $gap={0} $indent={4}>
                  <Draw s={12} w={2}>
                    <path d="M1 4h18M1 10h18M1 16h18M5 2v4M15 8v4M7 14v4" />
                  </Draw>
                </IconRow>
                <GoldBar />
              </IconRow>
            </AddressBar>

            <Bookmarks>
              <Bookmark href="#" $width={70}>
                <svg width="14" height="11" viewBox="0 0 14 11">
                  <rect width="14" height="11" rx="3" fill="#e8173f" />
                  <path d="M5.500 3.200v4.600l4-2.300z" fill="#fff" />
                </svg>
                YouTube
              </Bookmark>
              <Bookmark href="#" $width={121}>
                <svg width="13" height="13" viewBox="0 0 13 13" fill="none" stroke="#e29a2a" strokeWidth="1.500">
                  <rect x="5" y="5" width="8" height="8" fill="#33291c" stroke="none" />
                  <path d="M7 1C4 0 4.500 4 3 12H1M2 5h4M7 5l4 6M11.500 5L6.500 11" />
                </svg>
                Herramientas de t...
              </Bookmark>
              <Bookmark href="#" $width={122}>
                <svg width="13" height="13" viewBox="0 0 13 13">
                  <path d="M0 12V5l4-4v4l4-4v3l1 0V0h4v12z" fill="#35518f" />
                  <path d="M3 8l3-3M3 11l5-5" stroke="#0a1230" />
                </svg>
                Forex Factory | Fo...
              </Bookmark>
              <Bookmark href="#" $width={121}>
                <svg width="12" height="12" viewBox="0 0 12 12" fill="none" stroke="#fff" strokeWidth="2">
                  <path d="M1 2h7c3 0 3 5 0 5H5M1 5h4M3 7v4" />
                </svg>
                Dashboard | Fundi...
              </Bookmark>
              <Bookmark href="#" $width={72}>
                <svg width="13" height="13" viewBox="0 0 13 13" fill="none" stroke="#16233f" strokeWidth="1.300">
                  <rect width="13" height="13" fill="#fff" stroke="none" />
                  <path d="M2 9V4h3M2 6.500h3M7 9V4l3.500 5V4" />
                </svg>
                Accounts
              </Bookmark>
              <Bookmark href="#" $width={120}>
                <svg width="14" height="13" viewBox="0 0 14 13">
                  <rect width="14" height="13" fill="#34365f" />
                  <path d="M1 3h9L3 10.500h10" stroke="#0e1026" strokeWidth="2.400" fill="none" />
                </svg>
                <svg width="11" height="9" viewBox="0 0 11 9" fill="#e6e0f4">
                  <ellipse cx="6" cy="4" rx="5" ry="3.800" />
                  <path d="M2 5v4l3-2z" />
                </svg>
                1 - Vision Trade...
              </Bookmark>
            </Bookmarks>

            <ReplayApp>
              <TopBar>
                <Cell $w={29} aria-label="Back"><ArrowLeft size={15} /></Cell>
                <Cell $w={14} aria-label="FX Replay"><FxLogo size={16} /></Cell>
                <Gap $w={8} />
                <SymbolButton>
                  <Search size={13} />
                  EURUSD
                </SymbolButton>
                <Gap $w={12} />
                <Cell $w={36} aria-label="Compare"><CirclePlus size={17} strokeWidth={1.3} /></Cell>
                <Rule />
                <Gap $w={6} />
                <Cell $w={24} $blue>1m</Cell>
                {timeframes.map(([label, w]) => (
                  <Cell key={label} $w={w}>{label}</Cell>
                ))}
                <Cell $w={19} aria-label="More timeframes"><ChevronDown size={11} /></Cell>
                <Rule />
                <Cell $w={37} aria-label="Chart type"><Candles /></Cell>
                <Rule />
                <Cell $w={79}>New Layout</Cell>
                <Rule />
                <Cell $w={82}>
                  <FxLogo size={11} />
                  Indicators
                </Cell>
                <Rule />
                <Cell $w={36} aria-label="Undo"><UndoArrow /></Cell>
                <Cell $w={22} $dim aria-label="Redo"><RedoArrow /></Cell>
                <Gap $w={8} />
                <Spacer />
                <SessionName>Backtesting febrero</SessionName>
                <Spacer />
                <Cell $w={32} aria-label="Layout">
                  <Draw s={17}>
                    <rect x="1" y="2" width="18" height="16" rx="1.500" />
                    <path d="M10 2v16" />
                  </Draw>
                </Cell>
                <Gap $w={7} />
                <SaveButton>
                  1<small>Save</small>
                </SaveButton>
                <Cell $w={29} aria-label="Save options"><ChevronDown size={11} /></Cell>
                <Rule />
                <Cell $w={36} aria-label="Quick search">
                  <Draw s={17}>
                    <path d="M8 2a7 7 0 1 0 8 8M13.500 13.500L19 19M13 1L8 8h3l-1 5 5-7h-3z" />
                  </Draw>
                </Cell>
                <Cell $w={24} aria-label="Chart settings"><Hexagon /></Cell>
                <Cell $w={36} aria-label="Snapshot"><Camera size={19} strokeWidth={1.2} /></Cell>
                <Rule />
                <Cell $w={75}>
                  <svg width="22" height="12" viewBox="0 0 22 12" fill="none" stroke="#a9c4ff" strokeWidth="1.500">
                    <path d="M7 2L1 6l6 4z" fill="#6e9bff" stroke="#6e9bff" />
                    <path d="M12.500 1L9.500 11M15 2l6 4-6 4z" />
                  </svg>
                  Editor
                </Cell>
                <Rule />
                <AiSlot>
                  <AiButton aria-label="AI"><Stars /></AiButton>
                </AiSlot>
                <Cell $w={34} aria-label="Theme"><Moon size={15} /></Cell>
                <Cell $w={28} aria-label="Fullscreen"><Maximize size={17} /></Cell>
              </TopBar>

              <Workspace>
                <ToolColumn>
                  <ToolGroup $h={227}>
                    {[Crosshair, TrendLine, Fib, Pattern, Projection, Rectangle, TextTool].map((Icon, i) => (
                      <ToolButton key={i}><Icon /></ToolButton>
                    ))}
                    <ToolButton aria-label="Emoji"><Smile size={21} strokeWidth={1.3} /></ToolButton>
                  </ToolGroup>
                  <ToolRule />
                  <ToolGroup $h={56}>
                    <ToolButton aria-label="Measure">
                      <Turned $deg={90}><Ruler size={21} strokeWidth={1.3} /></Turned>
                    </ToolButton>
                    <ToolButton aria-label="Zoom"><ZoomIn size={19} strokeWidth={1.4} /></ToolButton>
                  </ToolGroup>
                  <ToolRule />
                  <ToolGroup $h={142}>
                    <ToolButton aria-label="Magnet"><MagnetTool /></ToolButton>
                    <ToolButton aria-label="Drawing lock"><PencilLock /></ToolButton>
                    <ToolButton aria-label="Lock"><LockOpen size={18} strokeWidth={1.4} /></ToolButton>
                    <ToolButton aria-label="Hide drawings"><EyeBrush /></ToolButton>
                    <ToolButton $on aria-label="Link">
                      <Turned $deg={-45}><Link2 size={18} strokeWidth={1.4} /></Turned>
                    </ToolButton>
                  </ToolGroup>
                  <ToolRule />
                  <ToolGroup $h={28}>
                    <ToolButton aria-label="Delete"><TrashCan /></ToolButton>
                  </ToolGroup>
                  <Spacer />
                  <ToolButton $on aria-label="Favorites"><Star size={18} strokeWidth={1.3} /></ToolButton>
                  <CollapseHandle aria-label="Collapse"><ChevronLeft size={6} /></CollapseHandle>
                </ToolColumn>

                <Center>
                  <Charts>
                    <EurusdPane />
                    <GbpusdPane />
                    <FavoriteTools>
                      <FloatButton $w={19}><Grip /></FloatButton>
                      {[TrendLine, HorizRay, Fib, Brush, Highlighter, Rectangle, ArrowPath].map((Icon, i) => (
                        <FloatButton $w={30} key={i}><Icon /></FloatButton>
                      ))}
                    </FavoriteTools>
                    <ShapeTools>
                      <FloatButton $w={18}><Grip /></FloatButton>
                      <FloatButton $w={30}><GridPlus /></FloatButton>
                      <FloatButton $w={30}><TextColor /></FloatButton>
                      <FloatButton $w={30}><Bucket color="#17392f" /></FloatButton>
                      <FloatButton $w={30}><Bucket color="#4a1420" /></FloatButton>
                      <FloatButton $w={30}><Hexagon /></FloatButton>
                      <FloatButton $w={30}><LockOpen size={17} strokeWidth={1.4} /></FloatButton>
                      <FloatButton $w={30}><TrashCan /></FloatButton>
                      <FloatButton $w={30}><Dots /></FloatButton>
                    </ShapeTools>
                  </Charts>
                  <RangeBar>
                    {ranges.map(([label, w]) => (
                      <Cell key={label} $w={w}>{label}</Cell>
                    ))}
                    <Rule $m={1} />
                    <Cell $w={33} aria-label="Go to date"><CalendarGo /></Cell>
                    <Spacer />
                    <Cell $w={104}>11:02:59 AM (UTC-5)</Cell>
                    <Rule $m={6} />
                    <Cell $w={14}>%</Cell>
                    <Cell $w={30}>log</Cell>
                    <Cell $w={26}>auto</Cell>
                    <Cell $w={30} $dim aria-label="Maximize">
                      <Draw s={12} w={1.8}>
                        <path stroke="#888" d="M12 1h7v7M8 19H1v-7" />
                      </Draw>
                    </Cell>
                  </RangeBar>
                </Center>

                <RightRail>
                  <Cell $w={24} aria-label="Object tree"><LayersIcon /></Cell>
                  <Spacer />
                  <RailItem><CirclePlus size={14} />Order</RailItem>
                  <RailItem>
                    <Draw s={15} w={2}><path d="M2 18V8h15M12 3l5.500 5-5.500 5" /></Draw>
                    Go to
                  </RailItem>
                  <RailItem>
                    <Draw s={14} w={1.8}><path d="M2 4h16v14H2zM2 9h16M6 1v5M14 1v5" /></Draw>
                    News
                  </RailItem>
                  <RailItem>
                    <Draw s={15} w={1.8}><path d="M2 1h16v18H2zM2 15h16M6 5.500h8M6 9.500h8" /></Draw>
                    Journal
                  </RailItem>
                  <ToolRule $m={6} />
                  <Cell $w={24} aria-label="Settings"><GearHex s={13} /></Cell>
                </RightRail>
              </Workspace>

              <AccountBar>
                <Pill $bg="#14b87f" $w={38}>Buy</Pill>
                <Pill $bg="#e05555" $w={39}>Sell</Pill>
                <QuantityBox>
                  <input aria-label="Quantity" placeholder="Quantity" />
                  <Stepper>
                    <button aria-label="Increase"><ChevronUp size={12} /></button>
                    <button aria-label="Decrease"><ChevronDown size={12} /></button>
                  </Stepper>
                </QuantityBox>
                <Pill $bg="#47484c" $w={32} aria-label="Quick order">
                  <Draw s={14} w={1.8}>
                    <path d="M10 1c4 3 5 7 5 12H5c0-5 1-9 5-12zM5 11l-3 5h16l-3-5M8 16v2h4v-2" />
                    <circle cx="10" cy="8.500" r="1.500" />
                  </Draw>
                </Pill>
                <Spacer />
                <MoreButton aria-label="More"><SolidDots /></MoreButton>
                <AnalyticsButton>
                  <svg width="11" height="10" viewBox="0 0 11 10" fill="none" stroke="currentColor">
                    <path d="M.5 6h2v3.500h-2zM4.500 3h2v6.500h-2zM8.500.500h2v9h-2z" />
                  </svg>
                  Analytics
                </AnalyticsButton>
                <Stat $w={145}><dt>Account Balance:</dt><dd>$5,454.55</dd></Stat>
                <Stat $w={119}><dt>Realized PnL:</dt><dd>$454.55</dd></Stat>
                <Stat $w={109}><dt>Unrealized PnL:</dt><dd>$0.00</dd></Stat>
                <Cell $w={32} aria-label="Hide balances"><EyeOff size={18} /></Cell>
                <Cell $w={32} aria-label="Expand"><ChevronUp size={16} /></Cell>
                <Cell $w={32} aria-label="Fullscreen"><Maximize size={18} /></Cell>
                <ReplayBar>
                  <FloatButton $w={31} aria-label="Move"><GripDots /></FloatButton>
                  <FloatButton $w={26} aria-label="Go to start">
                    <Draw s={14} w={2}><path d="M2 1v18M7 10h12M12 5l-5 5 5 5" /></Draw>
                  </FloatButton>
                  <Slider type="range" aria-label="Speed" defaultValue={0} />
                  <FloatButton $w={12} aria-label="Step back">
                    <svg width="11" height="12" viewBox="0 0 11 12" fill="currentColor"><path d="M0 0h1.500v12H0zM11 0v12L2 6z" /></svg>
                  </FloatButton>
                  <FloatButton $w={52} aria-label="Play">
                    <svg width="10" height="12" viewBox="0 0 10 12" fill="currentColor"><path d="M0 0l10 6-10 6z" /></svg>
                  </FloatButton>
                  <StepSelect aria-label="Step" defaultValue="1m"><option>1m</option></StepSelect>
                  <ChevronDown size={11} strokeWidth={3} />
                  <Gap $w={2} />
                  <FloatButton $w={26} aria-label="Step forward">
                    <svg width="11" height="12" viewBox="0 0 11 12" fill="currentColor"><path d="M9.500 0H11v12H9.500zM0 0l9 6-9 6z" /></svg>
                  </FloatButton>
                  <Switch type="checkbox" role="switch" aria-label="Replay" defaultChecked />
                </ReplayBar>
              </AccountBar>
            </ReplayApp>
          </Content>
        </BrowserBody>
      </BrowserWindow>
    </Desktop>
  );
}
